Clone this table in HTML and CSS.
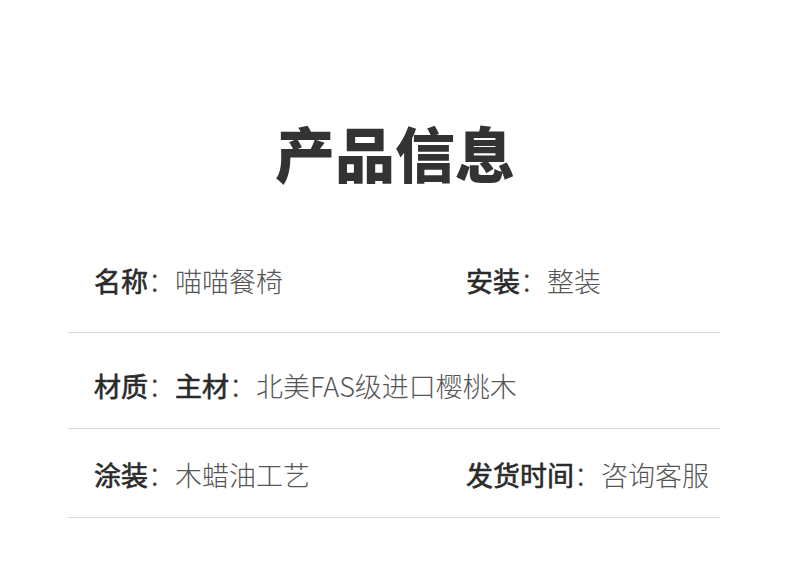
FILE: index.html
```html
<!DOCTYPE html>
<html lang="zh-CN">
<head>
<meta charset="utf-8">
<title>产品信息</title>
<link rel="stylesheet" href="styles.css">
</head>
<body>
<main class="page">
  <h1 class="title">产品信息</h1>
  <section class="info">
    <div class="row row-1">
      <div class="cell"><span class="label">名称</span><span class="colon">：</span><span class="value">喵喵餐椅</span></div>
      <div class="cell"><span class="label">安装</span><span class="colon">：</span><span class="value">整装</span></div>
    </div>
    <div class="row row-2">
      <div class="cell cell-wide"><span class="label">材质</span><span class="colon">：</span><span class="label">主材</span><span class="colon">：</span><span class="value">北美FAS级进口樱桃木</span></div>
    </div>
    <div class="row row-3">
      <div class="cell"><span class="label">涂装</span><span class="colon">：</span><span class="value">木蜡油工艺</span></div>
      <div class="cell"><span class="label">发货时间</span><span class="colon">：</span><span class="value">咨询客服</span></div>
    </div>
  </section>
</main>
</body>
</html>
```
FILE: styles.css
```css
html, body {
  margin: 0;
  padding: 0;
  background: #ffffff;
}
body {
  font-family: "Noto Sans CJK SC", "Noto Sans", sans-serif;
  color: #333333;
}
.page {
  width: 790px;
  height: 575px;
  overflow: hidden;
}
.title {
  margin: 0;
  padding-top: 122px;
  height: 60px;
  line-height: 60px;
  font-size: 60px;
  font-weight: 900;
  text-align: center;
  color: #333333;
}
.info {
  width: 652px;
  margin-left: 68px;
}
.row {
  display: grid;
  grid-template-columns: 372px 1fr;
  padding-left: 26px;
  border-bottom: 1px solid #dadada;
  line-height: 40px;
  font-size: 27px;
}
.row-1 {
  padding-top: 79px;
  padding-bottom: 31px;
}
.row-2 {
  padding-top: 33px;
  padding-bottom: 22px;
}
.row-3 {
  padding-top: 26px;
  padding-bottom: 22px;
}
.cell {
  white-space: nowrap;
}
.cell-wide {
  grid-column: 1 / 3;
}
.label {
  font-weight: 400;
  color: #2a2a2a;
  -webkit-text-stroke: 0.6px #2a2a2a;
}
.colon {
  font-weight: 300;
  color: #444444;
}
.value {
  font-weight: 300;
  color: #555555;
}
```
